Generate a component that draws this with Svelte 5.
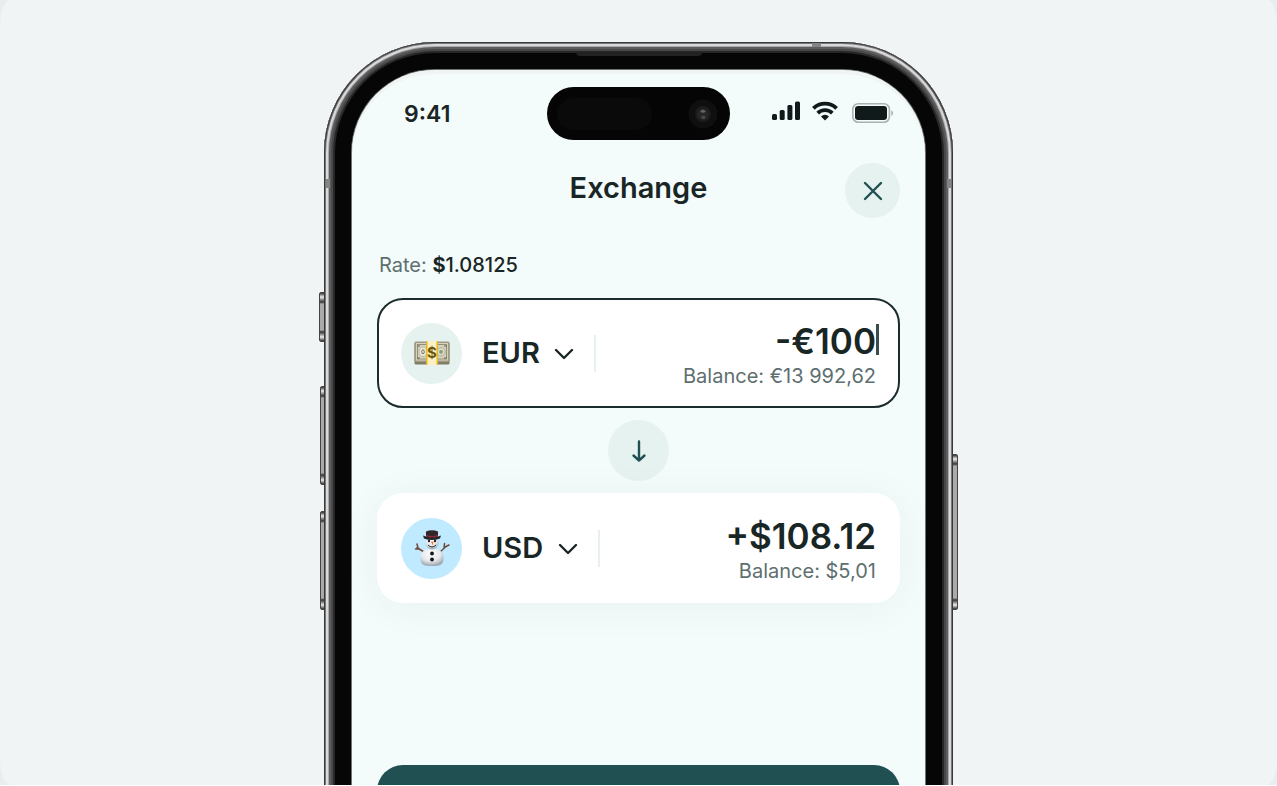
<script lang="ts">
    let rate = '1.08125';
    let fromCurrency = 'EUR';
    let toCurrency = 'USD';
    let fromAmount = '-€100';
    let toAmount = '+$108.12';
    let swapped = false;

    function swap() {
        swapped = !swapped;
    }
</script>

<main>
    <div class="stage">
        <div class="phone">
            <span class="side mute"></span>
            <span class="side volume-up"></span>
            <span class="side volume-down"></span>
            <span class="side power"></span>
            <span class="band band-top"></span>
            <span class="band band-left"></span>
            <span class="band band-right"></span>
            <span class="speaker"></span>

            <div class="screen">
                <div class="status">
                    <span class="time">9:41</span>
                    <div class="island">
                        <span class="sensor"></span>
                        <svg class="lens" width="30" height="30" viewBox="0 0 30 30" aria-hidden="true">
                            <circle cx="15" cy="15" r="14.5" fill="#0f0f0f" />
                            <circle cx="15" cy="15" r="8" fill="#1d1d1d" />
                            <circle cx="15" cy="15" r="5.5" fill="#262626" />
                            <ellipse cx="15" cy="12.3" rx="2.2" ry="1.5" fill="#666" />
                            <ellipse cx="15.3" cy="18.4" rx="2.2" ry="1.8" fill="#484848" />
                        </svg>
                    </div>
                    <div class="indicators">
                        <svg width="28" height="20" viewBox="0 0 28 20" fill="#111a1a" aria-hidden="true">
                            <rect x="0" y="13" width="5" height="6" rx="1.5" />
                            <rect x="7.7" y="9" width="5" height="10" rx="1.5" />
                            <rect x="15.4" y="4" width="5" height="15" rx="1.5" />
                            <rect x="23" y="0.6" width="5" height="18.4" rx="1.5" />
                        </svg>
                        <svg width="26" height="20" viewBox="0 0 26 20" aria-hidden="true">
                            <g fill="none" stroke="#111a1a" stroke-width="3.8">
                                <path d="M1.4 7.4a16.5 16.5 0 0 1 23.2 0" />
                                <path d="M5.7 12.2a10.3 10.3 0 0 1 14.6 0" />
                            </g>
                            <path d="M9 15.4a5.7 5.7 0 0 1 8 0l-4 4z" fill="#111a1a" />
                        </svg>
                        <svg class="battery" width="42" height="20" viewBox="0 0 42 20" aria-hidden="true">
                            <rect x="0.8" y="0.8" width="36.6" height="18.4" rx="5.5" fill="none" stroke="#a9b0b0" stroke-width="1.6" />
                            <rect x="3" y="3" width="32" height="14" rx="3.2" fill="#111a1a" />
                            <path d="M39.3 7.2a3.2 3.2 0 0 1 0 5.8z" fill="#a9b0b0" />
                        </svg>
                    </div>
                </div>

                <header>
                    <h1>Exchange</h1>
                    <button class="close" type="button" aria-label="Close">
                        <svg width="20" height="20" viewBox="0 0 20 20" aria-hidden="true">
                            <path d="M2 2l16 16M18 2L2 18" />
                        </svg>
                    </button>
                </header>

                <p class="rate">Rate: <strong><b>$</b>{rate}</strong></p>

                <section class="card active">
                    <span class="avatar">
                        <svg width="36" height="24" viewBox="0 0 36 24" aria-hidden="true">
                            <rect x="0.5" y="1" width="35" height="22.5" rx="1.5" fill="#817c68" />
                            <rect x="0.5" y="0.5" width="35" height="20.5" rx="1.5" fill="#a09a84" />
                            <rect x="2" y="2" width="32" height="17.5" fill="#d6d3bd" />
                            <rect x="3.5" y="3.5" width="29" height="14.5" fill="none" stroke="#929078" stroke-width="1" />
                            <ellipse cx="9" cy="10.8" rx="4" ry="4.8" fill="#ebe9d5" stroke="#bbb8a2" />
                            <ellipse cx="9" cy="10.8" rx="1.3" ry="2" fill="none" stroke="#747461" />
                            <circle cx="27" cy="10.8" r="4.2" fill="#ddd9c4" stroke="#b5b19b" />
                            <circle cx="27" cy="10.8" r="1.9" fill="#83a17a" />
                            <path d="M3 5h3M3 17h3M30 5h3M30 17h3" stroke="#666650" />
                            <rect x="12" y="0" width="12" height="24" rx="1" fill="#e9b818" />
                            <rect x="13.5" y="0" width="9" height="24" fill="#faf0c5" />
                            <text x="18" y="17" text-anchor="middle">$</text>
                        </svg>
                    </span>
                    <label class="currency">
                        <select bind:value={fromCurrency} aria-label="Currency to sell">
                            <option>EUR</option>
                        </select>
                        <svg width="20" height="12" viewBox="0 0 20 12" aria-hidden="true">
                            <path d="M2 2l8 8 8-8" />
                        </svg>
                    </label>
                    <span class="divider"></span>
                    <div class="money">
                        <div class="amount">
                            <input type="text" bind:value={fromAmount} aria-label="Amount to sell" />
                            <span class="caret"></span>
                        </div>
                        <p>Balance: €13 992,62</p>
                    </div>
                </section>

                <button class="swap" type="button" aria-label="Swap currencies" on:click={swap}>
                    <svg width="16" height="24" viewBox="0 0 16 24" aria-hidden="true">
                        <path d="M8 2.500v19M2.500 16.500l5.500 5 5.500-5" />
                    </svg>
                </button>

                <section class="card">
                    <span class="avatar snow">
                        <svg width="36" height="38" viewBox="0 0 36 38" aria-hidden="true">
                            <defs>
                                <radialGradient id="snow" cx="45%" cy="30%" r="70%">
                                    <stop offset="0" stop-color="#ffffff" />
                                    <stop offset="0.6" stop-color="#e4e8ec" />
                                    <stop offset="1" stop-color="#9ca6ae" />
                                </radialGradient>
                            </defs>
                            <path d="M10 23L3 18.500M5 20L1.500 20M4 19L3 15M26 23l6-5.500M30 19l.500-4.500M31 18l4-2" fill="none" stroke="#704a38" stroke-width="1.5" stroke-linecap="round" />
                            <path d="M6.500 29c0-6 4-9.500 11.500-9.500S29.500 23 29.500 29c0 6.500-3 8-11.500 8S6.500 35.500 6.500 29z" fill="url(#snow)" />
                            <circle cx="18" cy="14" r="6.500" fill="url(#snow)" />
                            <path d="M9 6.500q9 4 18 0l-1 3q-8 3-16 0z" fill="#24252a" />
                            <path d="M12 2.500q6-2.500 12 0v5q-6 3-12 0z" fill="#30262b" />
                            <path d="M12.300 6q6 2.300 11.400 0v1.200q-6 2.300-11.400 0z" fill="#9f2730" />
                            <circle cx="15" cy="12" r="1.200" fill="#222" />
                            <circle cx="21" cy="12" r="1.200" fill="#222" />
                            <path d="M17 12.500h2.500l-.800 4z" fill="#ee7928" />
                            <path d="M14 16q4 4 8 0" fill="none" stroke="#333" stroke-width="1" />
                            <circle cx="18" cy="24.500" r="1.900" fill="#161616" />
                            <circle cx="18" cy="30.500" r="1.900" fill="#161616" />
                        </svg>
                    </span>
                    <label class="currency">
                        <select bind:value={toCurrency} aria-label="Currency to buy">
                            <option>USD</option>
                        </select>
                        <svg width="20" height="12" viewBox="0 0 20 12" aria-hidden="true">
                            <path d="M2 2l8 8 8-8" />
                        </svg>
                    </label>
                    <span class="divider"></span>
                    <div class="money">
                        <div class="amount">
                            <input type="text" bind:value={toAmount} aria-label="Amount to buy" />
                        </div>
                        <p>Balance: $5,01</p>
                    </div>
                </section>

                <button class="submit" type="button" aria-label="Exchange"></button>
            </div>
        </div>
    </div>
</main>

<style>
    :global(body) {
        background: #fff;
    }

    main {
        height: calc(100vh - 1px);
        overflow: hidden;
        background: #e8eeef;
        color: #192626;
        font-family: Inter, "Liberation Sans", sans-serif;
    }

    .stage {
        position: relative;
        z-index: 0;
        height: 100%;
        overflow: hidden;
        box-sizing: border-box;
        padding-top: 42px;
        border-radius: 10px / 28px;
        background: #f0f4f5;
    }

    .phone {
        position: relative;
        box-sizing: border-box;
        max-width: 629px;
        margin: 0 auto;
        padding: 28px;
        border-radius: 111px;
        background: #060606;
        box-shadow:
            inset 0 0 0 1px #39393b,
            inset 0 0 0 2px #77777a,
            inset 0 0 0 4px #dad9db,
            inset 0 0 0 5px #a9a9ab,
            inset 0 0 0 7px #5d5d5d,
            inset 0 0 0 9px #484848,
            inset 0 0 0 11px #272727;
    }

    .screen {
        box-sizing: border-box;
        min-height: 1240px;
        padding: 17px 25px 0;
        border-radius: 83px;
        background: #f4fbfb;
        box-shadow: 0 0 0 1px #6e7474, inset 0 4px 0 #f0f5f3;
    }

    .side {
        position: absolute;
        z-index: -1;
        box-sizing: border-box;
        width: 8px;
        left: -4px;
        border: 1px solid #444;
        border-radius: 2px;
        background: linear-gradient(#333, #eee 4px, #333 9px, #aaa 11px, #aaa calc(100% - 11px), #333 calc(100% - 9px), #eee calc(100% - 4px), #333);
    }

    .mute {
        top: 250px;
        left: -5px;
        height: 50px;
    }

    .volume-up {
        top: 344px;
        height: 99px;
    }

    .volume-down {
        top: 469px;
        height: 99px;
    }

    .power {
        top: 412px;
        right: -5px;
        left: auto;
        height: 156px;
    }

    .band {
        position: absolute;
        background: #858585;
    }

    .band-top {
        top: 1px;
        right: 132px;
        width: 9px;
        height: 4px;
    }

    .band-left,
    .band-right {
        top: 137px;
        width: 4px;
        height: 9px;
    }

    .band-left {
        left: 2px;
    }

    .band-right {
        right: 2px;
    }

    .speaker {
        position: absolute;
        top: 10px;
        left: calc(50% - 63px);
        width: 126px;
        height: 4px;
        border-radius: 0 0 5px 5px;
        background: #222;
    }

    .status {
        display: grid;
        grid-template-columns: 1fr 183px 1fr;
        align-items: center;
    }

    .time {
        padding-left: 27px;
        font-size: 23px;
        font-weight: 600;
        line-height: 28px;
    }

    .island {
        display: flex;
        align-items: center;
        justify-content: space-between;
        box-sizing: border-box;
        height: 53px;
        padding: 0 12px 0 10px;
        border-radius: 27px;
        background: #050505;
    }

    .sensor {
        width: 95px;
        height: 32px;
        border-radius: 16px;
        background: #0a0a0a;
    }

    .indicators {
        display: flex;
        align-items: center;
        justify-content: flex-end;
        gap: 12px;
        padding: 0 6px 6px 0;
    }

    .battery {
        margin: 5px 0 0 2px;
    }

    header {
        display: grid;
        grid-template-columns: 55px 1fr 55px;
        align-items: center;
        margin-top: 23px;
    }

    h1 {
        grid-column: 2;
        margin: 0;
        padding-bottom: 5px;
        font-size: 29px;
        font-weight: 600;
        line-height: 36px;
        text-align: center;
    }

    button {
        display: flex;
        align-items: center;
        justify-content: center;
        padding: 0;
        border: 0;
        border-radius: 50%;
        background: #e6f2f0;
        cursor: pointer;
    }

    button path {
        fill: none;
        stroke: #205052;
        stroke-width: 2.4;
        stroke-linecap: round;
        stroke-linejoin: round;
    }

    .close {
        width: 55px;
        height: 55px;
    }

    .rate {
        margin: 33px 2px 19px;
        color: #5d6f6f;
        font-size: 20px;
        line-height: 28px;
    }

    .rate strong {
        color: #192626;
        font-weight: 500;
    }

    .rate b {
        font-weight: 700;
    }

    .card {
        display: flex;
        align-items: center;
        box-sizing: border-box;
        height: 110px;
        padding: 0 24px;
        border-radius: 26px;
        background: #fff;
        box-shadow: 0 4px 40px rgba(25, 60, 55, 0.05);
    }

    .active {
        padding: 0 22px;
        border: 2px solid #1b2c2e;
        box-shadow: none;
    }

    .avatar {
        display: flex;
        flex: none;
        align-items: center;
        justify-content: center;
        width: 61px;
        height: 61px;
        border-radius: 50%;
        background: #e6f2f0;
    }

    .avatar text {
        fill: #6d570d;
        font-size: 15px;
        font-weight: 700;
    }

    .snow {
        background: #c0eaff;
    }

    .currency {
        display: flex;
        align-items: center;
        gap: 14px;
        margin: 0 20px;
    }

    select {
        appearance: none;
        padding: 0;
        border: 0;
        background: none;
        color: inherit;
        font: 600 29px/36px Inter, "Liberation Sans", sans-serif;
        cursor: pointer;
    }

    .currency svg {
        padding-top: 2px;
    }

    .currency path {
        fill: none;
        stroke: #192626;
        stroke-width: 2.4;
        stroke-linecap: round;
        stroke-linejoin: round;
    }

    .divider {
        width: 2px;
        height: 37px;
        background: #e9f0f0;
    }

    .money {
        flex: 1;
        min-width: 0;
        padding-top: 3px;
        text-align: right;
    }

    .amount {
        position: relative;
    }

    input {
        display: block;
        box-sizing: border-box;
        width: 100%;
        height: 42px;
        padding: 0;
        border: 0;
        outline: 0;
        background: none;
        color: inherit;
        font: 600 35px/42px Inter, "Liberation Sans", sans-serif;
        text-align: right;
    }

    .caret {
        position: absolute;
        top: 4px;
        right: -3px;
        width: 3px;
        height: 31px;
        background: #3a4c4d;
    }

    .money p {
        margin: 0;
        color: #5d6f6f;
        font-size: 20px;
        line-height: 28px;
    }

    .swap {
        width: 61px;
        height: 61px;
        margin: 12px auto;
    }

    .submit {
        width: 100%;
        height: 74px;
        margin-top: 162px;
        border-radius: 26px;
        background: #215052;
    }
</style>
